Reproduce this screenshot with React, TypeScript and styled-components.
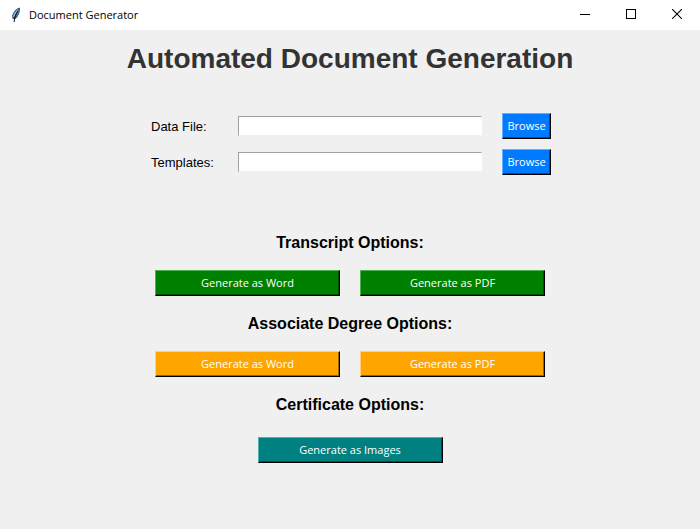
import React from "react";
import styled, { createGlobalStyle } from "styled-components";

const GlobalStyle = createGlobalStyle`
  *, *::before, *::after { box-sizing: border-box; }
  html, body, #root { height: 100%; }
  body { margin: 0; background: #f0f0f0; }
`;

const uiFont = `"Segoe UI", "Open Sans", "Noto Sans", sans-serif`;
const textFont = `"Liberation Sans", Arial, sans-serif`;

const Window = styled.div`
  display: flex;
  flex-direction: column;
  min-height: 100%;
  background: #f0f0f0;
  color: #000;
`;

const TitleBar = styled.header`
  display: flex;
  align-items: center;
  height: 30px;
  padding-left: 8px;
  background: #fff;
  font: 11px/16px ${uiFont};
`;

const WindowTitle = styled.span`
  flex: 1;
  padding-left: 5px;
`;

const WindowButton = styled.button`
  display: flex;
  align-items: center;
  justify-content: center;
  width: 46px;
  height: 30px;
  padding: 0 0 2px;
  border: 0;
  background: transparent;
  color: #000;
`;

const Content = styled.main`
  display: flex;
  flex-direction: column;
  align-items: center;
  padding-top: 13px;
`;

const Heading = styled.h1`
  margin: 0;
  color: #333;
  font: bold 28px/32px ${textFont};
`;

const Fields = styled.form`
  display: grid;
  grid-template-columns: 87px 264px 49px;
  row-gap: 10px;
  align-items: center;
  margin-top: 38px;
  padding-left: 2px;
`;

const Label = styled.label`
  padding-top: 2px;
  font: 13px/16px ${textFont};
`;

const PathInput = styled.input`
  width: 244px;
  height: 20px;
  padding: 0 2px;
  border: 1px solid;
  border-color: #a0a0a0 #fff #f0f0f0 #a0a0a0;
  border-radius: 0;
  background: #fff;
  font: 12px/16px ${textFont};
  outline: none;
`;

const RaisedButton = styled.button<{ $color: string; $light: string }>`
  height: 26px;
  padding: 0;
  border: 1px solid;
  border-color: ${(p) => p.$light} #000 #000 ${(p) => p.$light};
  border-radius: 0;
  background: ${(p) => p.$color};
  box-shadow: inset -1px -1px 0 rgba(0, 0, 0, 0.4);
  color: #fff;
  font: 11px/16px ${uiFont};
  white-space: nowrap;
`;

const Section = styled.section`
  display: flex;
  flex-direction: column;
  align-items: center;
`;

const Sections = styled.div`
  display: flex;
  flex-direction: column;
  gap: 18px;
  margin-top: 58px;
`;

const SectionTitle = styled.h2`
  margin: 0;
  font: bold 16px/20px ${textFont};
`;

const ButtonRow = styled.div<{ $gap: number }>`
  display: grid;
  grid-auto-flow: column;
  grid-auto-columns: 185px;
  column-gap: 20px;
  margin-top: ${(p) => p.$gap}px;
`;

const options = [
  { title: "Transcript Options:", color: "#008000", light: "#50b050", gap: 17, actions: ["Generate as Word", "Generate as PDF"] },
  { title: "Associate Degree Options:", color: "#ffa500", light: "#ffd080", gap: 17, actions: ["Generate as Word", "Generate as PDF"] },
  { title: "Certificate Options:", color: "#008080", light: "#50b0b0", gap: 22, actions: ["Generate as Images"] },
];

const fields = [
  { id: "data-file", label: "Data File:" },
  { id: "templates", label: "Templates:" },
];

function FeatherIcon() {
  return (
    <svg width="16" height="16" viewBox="0 0 16 16" aria-hidden="true">
      <path d="M11.8 .5C8.5 1.3 5.7 4.2 4.3 8.1L4.4 11.6L6.5 12.3C9.8 10.2 12.2 6.3 11.8 .5Z" fill="#24384c" />
      <path d="M11.2 1.2C8.2 2.8 5.8 5.6 4.9 9L5.6 11C7.2 7.8 9 4.8 11.2 1.2Z" fill="#86b6de" />
      <path d="M11.3 2.2C9.5 5.3 8.1 8 7 11.2C9.6 9.2 11.3 6 11.3 2.2Z" fill="#5384b4" />
      <path d="M9.6 4.4C7.6 7.6 6.5 10.8 6.1 15" fill="none" stroke="#101820" strokeWidth="1" />
    </svg>
  );
}

export default function App() {
  return (
    <Window>
      <GlobalStyle />
      <TitleBar>
        <FeatherIcon />
        <WindowTitle>Document Generator</WindowTitle>
        <WindowButton type="button" aria-label="Minimize">
          <svg width="10" height="10" viewBox="0 0 10 10" shapeRendering="crispEdges">
            <path d="M0 5.5H10" stroke="#000" />
          </svg>
        </WindowButton>
        <WindowButton type="button" aria-label="Maximize">
          <svg width="10" height="10" viewBox="0 0 10 10" shapeRendering="crispEdges">
            <path d="M.5 .5H9.5V9.5H.5Z" fill="none" stroke="#000" />
          </svg>
        </WindowButton>
        <WindowButton type="button" aria-label="Close">
          <svg width="10" height="10" viewBox="0 0 10 10">
            <path d="M0 0L10 10M10 0L0 10" stroke="#000" strokeWidth="1.1" />
          </svg>
        </WindowButton>
      </TitleBar>
      <Content>
        <Heading>Automated Document Generation</Heading>
        <Fields>
          {fields.map((f) => (
            <React.Fragment key={f.id}>
              <Label htmlFor={f.id}>{f.label}</Label>
              <PathInput id={f.id} type="text" />
              <RaisedButton type="button" $color="#007bff" $light="#60b0ff">
                Browse
              </RaisedButton>
            </React.Fragment>
          ))}
        </Fields>
        <Sections>
          {options.map((o) => (
            <Section key={o.title}>
              <SectionTitle>{o.title}</SectionTitle>
              <ButtonRow $gap={o.gap}>
                {o.actions.map((a) => (
                  <RaisedButton key={a} type="button" $color={o.color} $light={o.light}>
                    {a}
                  </RaisedButton>
                ))}
              </ButtonRow>
            </Section>
          ))}
        </Sections>
      </Content>
    </Window>
  );
}
